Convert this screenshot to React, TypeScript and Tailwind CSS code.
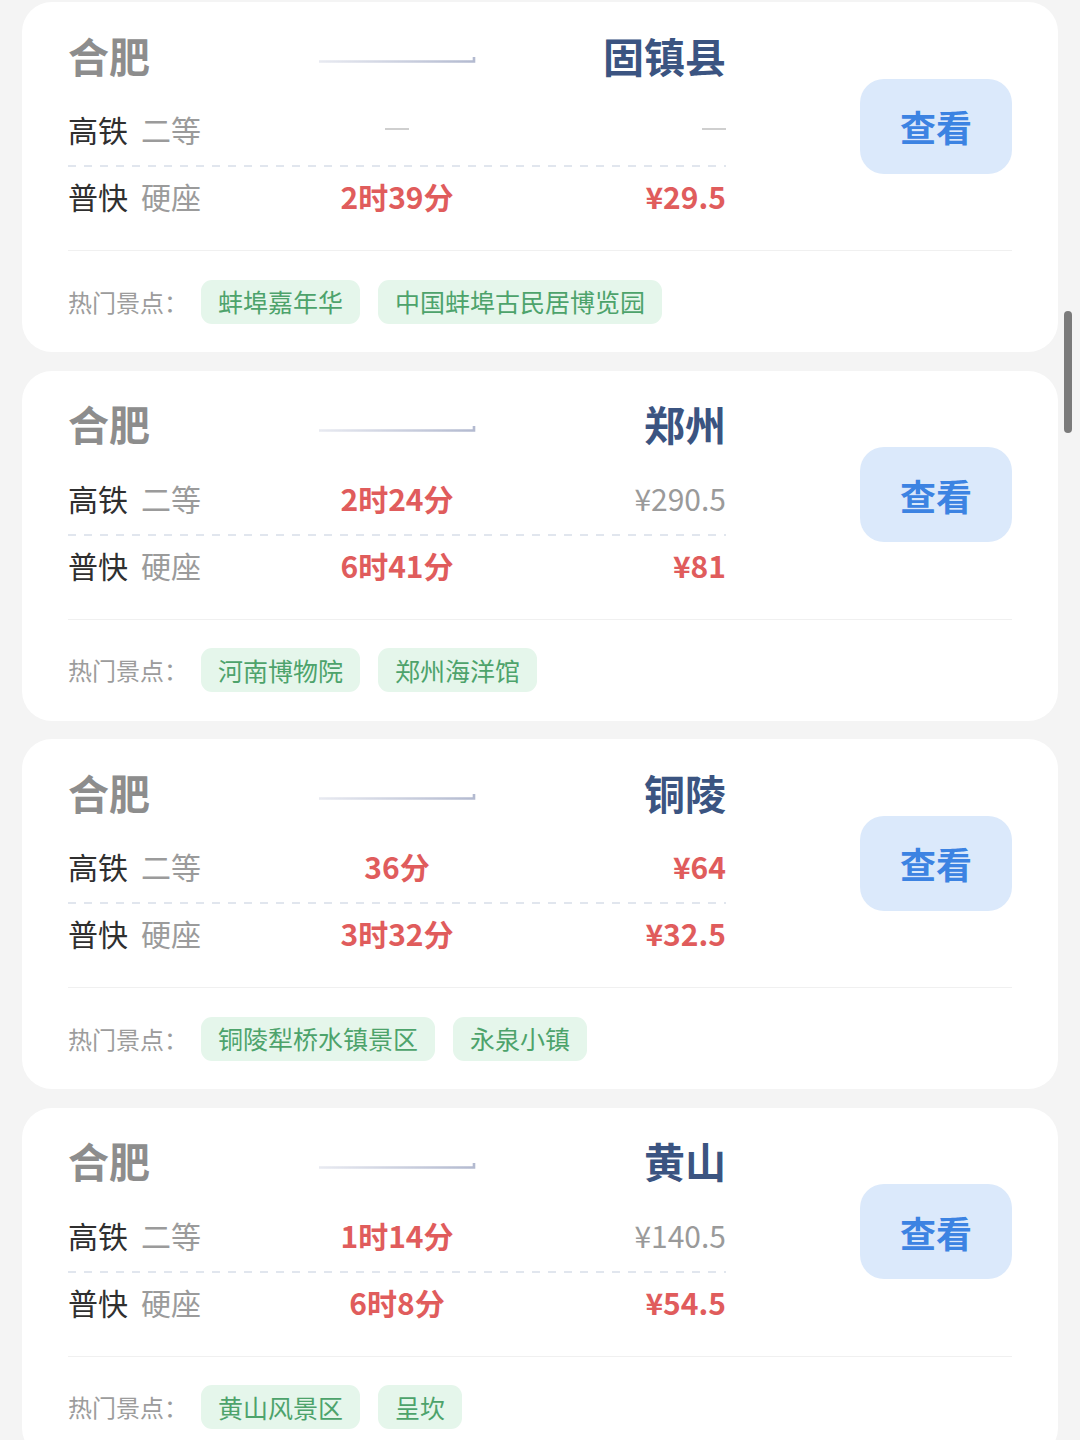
import React from 'react';

type Cell = { text: string; strong: boolean } | null;

interface Route {
  to: string;
  fast: [Cell, Cell];
  slow: [Cell, Cell];
  spots: string[];
}

const routes: Route[] = [
  {
    to: '固镇县',
    fast: [null, null],
    slow: [
      { text: '2时39分', strong: true },
      { text: '¥29.5', strong: true }
    ],
    spots: ['蚌埠嘉年华', '中国蚌埠古民居博览园']
  },
  {
    to: '郑州',
    fast: [
      { text: '2时24分', strong: true },
      { text: '¥290.5', strong: false }
    ],
    slow: [
      { text: '6时41分', strong: true },
      { text: '¥81', strong: true }
    ],
    spots: ['河南博物院', '郑州海洋馆']
  },
  {
    to: '铜陵',
    fast: [
      { text: '36分', strong: true },
      { text: '¥64', strong: true }
    ],
    slow: [
      { text: '3时32分', strong: true },
      { text: '¥32.5', strong: true }
    ],
    spots: ['铜陵犁桥水镇景区', '永泉小镇']
  },
  {
    to: '黄山',
    fast: [
      { text: '1时14分', strong: true },
      { text: '¥140.5', strong: false }
    ],
    slow: [
      { text: '6时8分', strong: true },
      { text: '¥54.5', strong: true }
    ],
    spots: ['黄山风景区', '呈坎']
  }
];

const font = "font-['Noto_Sans_CJK_SC','Noto_Sans',sans-serif]";

const Arrow = () => (
  <svg width="158" height="12" viewBox="0 0 158 12" className="block">
    <defs>
      <linearGradient id="arrowGrad" x1="0" x2="1" y1="0" y2="0">
        <stop offset="0" stopColor="#e8eaf1" />
        <stop offset="1" stopColor="#b3bad0" />
      </linearGradient>
    </defs>
    <path d="M1 8.5 H156 V4" fill="none" stroke="url(#arrowGrad)" strokeWidth="2.6" />
  </svg>
);

const Value = ({ cell, align }: { cell: Cell; align: 'center' | 'right' }) => {
  const wrap = align === 'center' ? 'justify-center' : 'justify-end';
  if (!cell) {
    return (
      <div className={`flex ${wrap}`}>
        <div className="w-[24px] h-[2px] bg-[#cfcfcf]" />
      </div>
    );
  }
  return (
    <div className={`flex ${wrap}`}>
      <span
        className={
          cell.strong
            ? 'text-[30px] leading-none font-bold text-[#e05c5c]'
            : 'text-[30px] leading-none text-[#9a9a9a]'
        }
      >
        {cell.text}
      </span>
    </div>
  );
};

const TrainRow = ({
  kind,
  seat,
  cells,
  className = ''
}: {
  kind: string;
  seat: string;
  cells: [Cell, Cell];
  className?: string;
}) => (
  <div className={`grid grid-cols-3 items-center ${className}`}>
    <div className="flex items-center gap-[13px] text-[30px] leading-none">
      <span className="text-[#2f2f2f]">{kind}</span>
      <span className="text-[#9b9b9b]">{seat}</span>
    </div>
    <Value cell={cells[0]} align="center" />
    <Value cell={cells[1]} align="right" />
  </div>
);

const RouteCard = ({ route }: { route: Route }) => (
  <div className="shrink-0 h-[350px] rounded-[30px] bg-white px-[46px]">
    <div className="flex items-center justify-between pt-[25px] pb-[25px] border-b border-[#f0f0f0]">
      <div className="w-[658px]">
        <div className="grid grid-cols-3 items-center h-[56px]">
          <span className="text-[41px] leading-none font-bold text-[#8d8d8d]">合肥</span>
          <div className="flex justify-center pt-[8px]">
            <Arrow />
          </div>
          <span className="text-right text-[41px] leading-none font-bold text-[#3b5481]">{route.to}</span>
        </div>
        <TrainRow kind="高铁" seat="二等" cells={route.fast} className="mt-[10px] h-[72px]" />
        <div className="h-[2px] bg-[linear-gradient(to_right,#e1e6ee_50%,transparent_50%)] bg-[length:16px_2px]" />
        <TrainRow kind="普快" seat="硬座" cells={route.slow} className="h-[58px]" />
      </div>
      <button
        type="button"
        className="w-[152px] h-[95px] rounded-[24px] bg-[#dbe9fb] text-[36px] leading-none font-bold text-[#3c83e2]"
      >
        查看
      </button>
    </div>
    <div className="flex items-center h-[101px]">
      <span className="text-[24px] leading-none text-[#9c9c9c]">热门景点：</span>
      <div className="flex items-center gap-[18px] ml-[13px]">
        {route.spots.map((spot) => (
          <span
            key={spot}
            className="h-[44px] flex items-center px-[17px] rounded-[11px] bg-[#e5f6eb] text-[25px] leading-none text-[#4da36b]"
          >
            {spot}
          </span>
        ))}
      </div>
    </div>
  </div>
);

export default function App() {
  return (
    <div className={`relative h-[1440px] overflow-hidden bg-[#f4f4f4] ${font}`}>
      <div className="flex flex-col gap-[18.5px] px-[22px] pt-[2px]">
        {routes.map((r) => (
          <RouteCard key={r.to} route={r} />
        ))}
      </div>
      {/* overlay scrollbar */}
      <div className="absolute right-[8px] top-[311px] w-[8px] h-[122px] rounded-full bg-[#7b7b7b]" />
    </div>
  );
}
